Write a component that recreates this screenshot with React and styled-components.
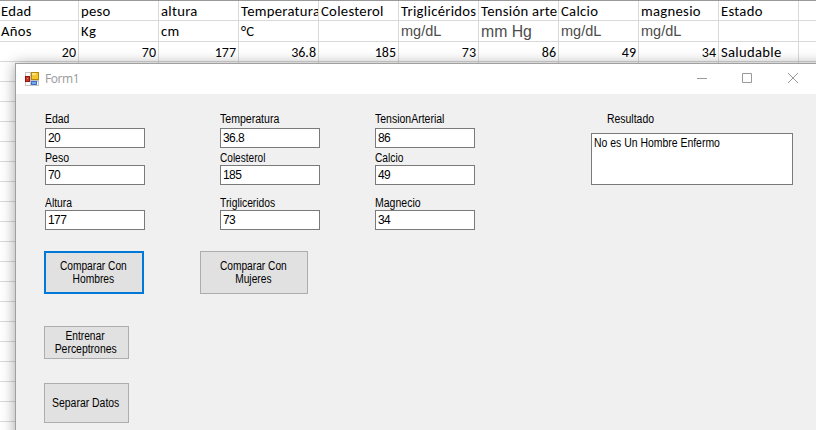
import React from "react";
import styled, { createGlobalStyle } from "styled-components";

const GlobalStyle = createGlobalStyle`
  * { box-sizing: border-box; }
  html, body { margin: 0; padding: 0; overflow: hidden; background: #fff; }
`;

const Desktop = styled.div`
  position: relative;
  width: 816px;
  height: 430px;
  overflow: hidden;
  background: #fff;
`;

const Sheet = styled.div`
  border-top: 1px solid #999;
  width: 879px;
`;

const SheetRow = styled.div`
  display: grid;
  grid-template-columns: 79px repeat(10, 80px);
  height: ${(p) => p.$height || 20}px;
`;

const Cell = styled.div`
  border-right: 1px solid #d9d9d9;
  border-bottom: 1px solid #d9d9d9;
  padding: 0 2px 0 ${(p) => (p.$first ? 1 : 2)}px;
  overflow: hidden;
  white-space: nowrap;
  text-align: ${(p) => (p.$number ? "right" : "left")};
  font-family: ${(p) => (p.$unit ? '"Liberation Sans"' : "Carlito, Lato")}, sans-serif;
  font-size: ${(p) => p.$unit || (p.$number ? 14 : 14.67)}px;
  letter-spacing: ${(p) => (p.$unit || p.$number ? 0 : 0.3)}px;
  line-height: ${(p) => (p.$unit ? 21 : 21)}px;
  color: ${(p) => (p.$unit ? "#4d4d4d" : "#000")};
`;

const Window = styled.section`
  position: absolute;
  left: 15px;
  top: 63px;
  width: 860px;
  height: 420px;
  background: #f0f0f0;
  border: 1px solid #a0a0a0;
  box-shadow: 0 1px 13px rgba(0, 0, 0, 0.36);
  font-family: "Liberation Sans", sans-serif;
  font-size: 12px;
  color: #000;
`;

const TitleBar = styled.header`
  display: flex;
  align-items: center;
  width: 800px;
  height: 30px;
  padding-left: 9px;
  background: #fff;
  box-shadow: 60px 0 #fff;
`;

const Title = styled.span`
  flex: 1;
  margin-left: 6px;
  font: 12px/16px "Open Sans", sans-serif;
  letter-spacing: ${(p) => p.$spacing}px;
  color: #999;
`;

const Controls = styled.div`
  display: flex;
  svg { display: block; }
`;

const Client = styled.main`
  padding: 18px 0 0 28px;
`;

const Fields = styled.div`
  display: grid;
  grid-template-columns: 175px 155px 216px 204px;
  height: 139px;
  margin-left: 1px;
`;

const Column = styled.div`
  display: flex;
  flex-direction: column;
  align-items: flex-start;
`;

const Field = styled.label`
  display: block;
  margin-bottom: ${(p) => p.$gap || 0}px;
`;

const Text = styled.span`
  display: block;
  height: ${(p) => p.$height || 14}px;
  margin-left: ${(p) => p.$shift || 0}px;
  line-height: 14px;
  white-space: nowrap;
  transform: scaleX(${(p) => p.$scale || 0.87});
  transform-origin: ${(p) => (p.$centered ? "center" : "left")};
`;

const Input = styled.input`
  display: block;
  width: 100px;
  height: 20px;
  padding: 0 2px;
  border: 1px solid #7a7a7a;
  border-radius: 0;
  outline: none;
  background: #fff;
  font: 12px "Liberation Sans", sans-serif;
  letter-spacing: -0.6px;
  color: #000;
`;

const Result = styled.div`
  width: 202px;
  height: 52px;
  padding: 2px;
  border: 1px solid #7a7a7a;
  background: #fff;
`;

const Buttons = styled.div`
  display: flex;
  gap: 56px;
  margin-bottom: ${(p) => p.$gap || 0}px;
`;

const Button = styled.button`
  display: flex;
  flex-direction: column;
  align-items: center;
  justify-content: center;
  width: ${(p) => p.$width}px;
  height: ${(p) => p.$height}px;
  padding: 0 2px ${(p) => p.$lift || 0}px 0;
  border: ${(p) => (p.$focused ? "2px solid #0078d7" : "1px solid #adadad")};
  border-radius: 0;
  background: #e1e1e1;
  font: 12px "Liberation Sans", sans-serif;
  color: #000;
`;

const columns = [
  [
    ["Edad", "20", 0.87],
    ["Peso", "70", 0.88],
    ["Altura", "177", 0.86],
  ],
  [
    ["Temperatura", "36.8", 0.88],
    ["Colesterol", "185", 0.84],
    ["Trigliceridos", "73", 0.86],
  ],
  [
    ["TensionArterial", "86", 0.875],
    ["Calcio", "49", 0.85],
    ["Magnecio", "34", 0.877],
  ],
];

const names = ["Edad", "peso", "altura", "Temperatura", "Colesterol", "Triglicéridos", "Tensión arte", "Calcio", "magnesio", "Estado", ""];
const units = ["Años", "Kg", "cm", "°C", "", "mg/dL", "mm Hg", "mg/dL", "mg/dL", "", ""];
const values = ["20", "70", "177", "36.8", "185", "73", "86", "49", "34", "Saludable", ""];
const unitSizes = { "mg/dL": 14.5, "mm Hg": 15.8 };

function FormIcon() {
  return (
    <svg width="14" height="14" viewBox="0 0 14 14" shapeRendering="crispEdges">
      <path d="M0 0h14v14H0z" fill="#c5c5c5" />
      <path d="M1 1h4v3H1zM1 10h4v3H1zM12 10h1v3h-1z" fill="#fff" />
      <path d="M6 0h8v8H6z" fill="#b98708" />
      <path d="M7 1h6v6H7z" fill="#f4c52e" />
      <path d="M7 1h4v2H7z" fill="#ffe582" />
      <path d="M0 4h5v6H0z" fill="#941512" />
      <path d="M1 5h3v4H1z" fill="#c9382c" />
      <path d="M2 6h1v1H2z" fill="#ee8a7c" />
      <path d="M6 9h6v4H6z" fill="#3b70c4" />
      <path d="M7 10h4v2H7z" fill="#73a7ee" />
    </svg>
  );
}

export default function App() {
  return (
    <>
      <GlobalStyle />
      <Desktop>
        <Sheet>
          <SheetRow>
            {names.map((v, i) => (
              <Cell key={i} $first={i === 0}>{v}</Cell>
            ))}
          </SheetRow>
          <SheetRow $height={21}>
            {units.map((v, i) => (
              <Cell key={i} $first={i === 0} $unit={unitSizes[v]}>{v}</Cell>
            ))}
          </SheetRow>
          <SheetRow>
            {values.map((v, i) => (
              <Cell key={i} $number={i < 9}>{v}</Cell>
            ))}
          </SheetRow>
          {Array.from({ length: 19 }, (_, r) => (
            <SheetRow key={r}>
              {names.map((_, i) => <Cell key={i} />)}
            </SheetRow>
          ))}
        </Sheet>
        <Window>
          <TitleBar>
            <FormIcon />
            <Title $spacing={-0.4}>Form1</Title>
            <Controls>
              <svg width="136" height="30" fill="none" stroke="#999">
                <path d="M17 14.5h10" />
                <path d="M62.5 9.5h9v9h-9z" />
                <path d="M108 9l10 10M118 9l-10 10" />
              </svg>
            </Controls>
          </TitleBar>
          <Client>
            <Fields>
              {columns.map((fields, c) => (
                <Column key={c}>
                  {fields.map(([label, value, scale], i) => (
                    <Field key={label} $gap={[3, 11, 0][i]}>
                      <Text
                        $height={i === 0 ? 16 : 14}
                        $scale={scale}
                        $shift={c > 0 && i === 1 ? -0.5 : 0}
                      >
                        {label}
                      </Text>
                      <Input defaultValue={value} />
                    </Field>
                  ))}
                </Column>
              ))}
              <Column>
                <Text $height={21} $shift={16}>Resultado</Text>
                <Result><Text>No es Un Hombre Enfermo</Text></Result>
              </Column>
            </Fields>
            <Buttons $gap={32}>
              <Button $width={100} $height={43} $lift={1} $focused>
                <Text $centered $height={13} $scale={0.85}>Comparar Con</Text>
                <Text $centered $height={13} $scale={0.855}>Hombres</Text>
              </Button>
              <Button $width={108} $height={43} $lift={1}>
                <Text $centered $height={13} $scale={0.85}>Comparar Con</Text>
                <Text $centered $height={13} $scale={0.85}>Mujeres</Text>
              </Button>
            </Buttons>
            <Buttons $gap={24}>
              <Button $width={85} $height={33} $lift={1}>
                <Text $centered $height={13} $scale={0.85}>Entrenar</Text>
                <Text $centered $height={13}>Perceptrones</Text>
              </Button>
            </Buttons>
            <Buttons>
              <Button $width={85} $height={40}>
                <Text $centered>Separar Datos</Text>
              </Button>
            </Buttons>
          </Client>
        </Window>
      </Desktop>
    </>
  );
}
